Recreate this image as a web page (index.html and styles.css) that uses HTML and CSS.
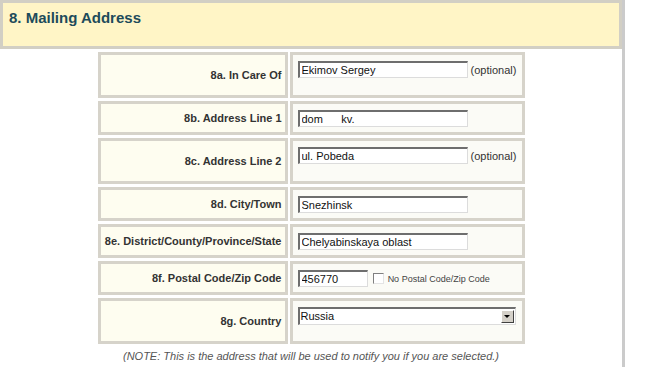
FILE: index.html
```html
<!DOCTYPE html>
<html lang="en">
<head>
<meta charset="UTF-8">
<meta name="viewport" content="width=device-width, initial-scale=1.0">
<title>Mailing Address</title>
<link rel="stylesheet" href="styles.css">
</head>
<body>
<div class="page">
    <div class="section-head">
        <h2>8. Mailing Address</h2>
    </div>

    <table class="form-table">
        <tr>
            <td class="label">8a. In Care Of</td>
            <td class="field"><div class="field-inner tall">
                <input type="text" class="text-box" value="Ekimov Sergey"> <span class="hint">(optional)</span>
            </div></td>
        </tr>
        <tr>
            <td class="label">8b. Address Line 1</td>
            <td class="field"><div class="field-inner">
                <input type="text" class="text-box" value="dom      kv.   ">
            </div></td>
        </tr>
        <tr>
            <td class="label">8c. Address Line 2</td>
            <td class="field"><div class="field-inner tall">
                <input type="text" class="text-box" value="ul. Pobeda"> <span class="hint">(optional)</span>
            </div></td>
        </tr>
        <tr>
            <td class="label">8d. City/Town</td>
            <td class="field"><div class="field-inner">
                <input type="text" class="text-box" value="Snezhinsk">
            </div></td>
        </tr>
        <tr>
            <td class="label">8e. District/County/Province/State</td>
            <td class="field"><div class="field-inner">
                <input type="text" class="text-box" value="Chelyabinskaya oblast">
            </div></td>
        </tr>
        <tr>
            <td class="label">8f. Postal Code/Zip Code</td>
            <td class="field"><div class="field-inner">
                <input type="text" class="text-box zip" value="456770">
                <input type="checkbox" class="check" id="nozip">
                <label for="nozip" class="small">No Postal Code/Zip Code</label>
            </div></td>
        </tr>
        <tr>
            <td class="label">8g. Country</td>
            <td class="field"><div class="field-inner tall">
                <div class="select-box">
                    <span class="select-value">Russia</span>
                    <span class="select-btn"><span class="arrow"></span></span>
                </div>
            </div></td>
        </tr>
    </table>

    <p class="note">(NOTE: This is the address that will be used to notify you if you are selected.)</p>
</div>
</body>
</html>
```

FILE: styles.css
```css
body {
    margin: 0;
    padding: 0;
    background-color: #fff;
    font-family: "Liberation Sans", Arial, sans-serif;
    color: #333;
}

.page {
    width: 622px;
    min-height: 367px;
    border-right: 3px solid #cbcbcb;
}

.section-head {
    height: 43px;
    background-color: #fff5c6;
    border: 3px solid #d2cfc4;
    padding: 0 6px;
}

.section-head h2 {
    margin: 0;
    padding-top: 6px;
    font-size: 15px;
    line-height: 17px;
    color: #1d4b5b;
}

.form-table {
    margin: 0 auto;
    border-collapse: separate;
    border-spacing: 2px 3px;
}

.form-table td {
    border: 3px solid #d6d3ca;
    padding: 0;
}

.label {
    width: 181px;
    padding-right: 3px !important;
    background-color: #fefdf0;
    text-align: right;
    vertical-align: middle;
    font-size: 11px;
    font-weight: bold;
    color: #333;
}

.field {
    width: 229px;
    background-color: #fbfbf6;
    vertical-align: top;
}

.field-inner {
    height: 22px;
    padding: 6px 0 0 5px;
    font-size: 11px;
}

.field-inner.tall {
    height: 34px;
}

.text-box {
    width: 170px;
    height: 17px;
    box-sizing: border-box;
    margin: 0;
    padding: 0 2px;
    border-top: 2px solid #6e6e6e;
    border-left: 2px solid #6e6e6e;
    border-right: 1px solid #dcdcdc;
    border-bottom: 1px solid #dcdcdc;
    background-color: #fff;
    font-family: "Liberation Sans", Arial, sans-serif;
    font-size: 11px;
    color: #111;
    vertical-align: middle;
}

.text-box.zip {
    width: 70px;
}

.hint {
    margin-left: 0;
    color: #333;
    vertical-align: middle;
}

.check {
    appearance: none;
    width: 11px;
    height: 11px;
    margin: 0 0 0 2px;
    border-top: 1px solid #808080;
    border-left: 1px solid #808080;
    border-right: 1px solid #e4e4e4;
    border-bottom: 1px solid #e4e4e4;
    background-color: #fff;
    vertical-align: middle;
}

.small {
    font-size: 9px;
    color: #444;
    margin-left: 1px;
    vertical-align: middle;
}

.select-box {
    display: flex;
    width: 218px;
    height: 18px;
    box-sizing: border-box;
    border-top: 2px solid #6e6e6e;
    border-left: 2px solid #6e6e6e;
    border-right: 1px solid #dcdcdc;
    border-bottom: 1px solid #dcdcdc;
    background-color: #fff;
}

.select-value {
    flex: 1;
    padding-left: 1px;
    line-height: 15px;
    font-size: 11px;
    color: #111;
}

.select-btn {
    width: 11px;
    height: 11px;
    margin: 1px 1px 0 0;
    display: flex;
    align-items: center;
    justify-content: center;
    background-color: #d4d0c8;
    border-top: 1px solid #fff;
    border-left: 1px solid #fff;
    border-right: 1px solid #404040;
    border-bottom: 1px solid #404040;
}

.arrow {
    width: 0;
    height: 0;
    border-left: 3px solid transparent;
    border-right: 3px solid transparent;
    border-top: 3px solid #000;
}

.note {
    margin: 3px 0 0;
    text-align: center;
    font-size: 11px;
    font-style: italic;
    color: #555;
}
```
